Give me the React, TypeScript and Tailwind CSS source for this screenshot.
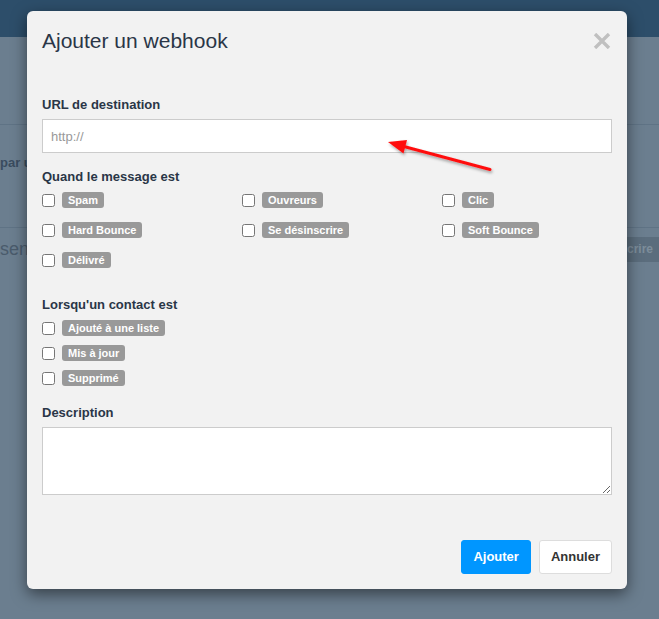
import React from 'react';

const messageEvents = ['Spam', 'Ouvreurs', 'Clic', 'Hard Bounce', 'Se désinscrire', 'Soft Bounce', 'Délivré'];
const contactEvents = ['Ajouté à une liste', 'Mis à jour', 'Supprimé'];

const Option: React.FC<{ label: string }> = ({ label }) => (
  <label className="flex items-center h-[16px] gap-[7px]">
    <input type="checkbox" className="m-0 w-[13px] h-[13px] shrink-0" />
    <span className="bg-[#999999] text-white font-bold text-[11px] leading-[16px] px-[6px] rounded-[3px] whitespace-nowrap">
      {label}
    </span>
  </label>
);

const App: React.FC = () => {
  return (
    <div className="relative w-full h-[619px] overflow-hidden bg-[#6b7e8f] font-['Liberation_Sans',Arial,sans-serif]">
      {/* page behind the backdrop */}
      <div className="absolute inset-0 flex flex-col">
        <div className="h-[37px] bg-[#2d4e6a]" />
        <div className="h-[88px] border-b border-[#5f7385]" />
        <div className="h-[103px] border-b border-[#5f7385] pt-[25px]">
          <span className="text-[13px] font-bold text-[#3a4c5f]">par un</span>
        </div>
        <div className="flex items-start justify-between pt-[9px]">
          <span className="text-[18px] text-[#4a5b6c] leading-[25px]">sen</span>
          <span className="bg-[#5b6d7d] text-[#7d8d9b] text-[12px] font-bold leading-[25px] pl-[14px] pr-[6px]">Désinscrire</span>
        </div>
      </div>

      {/* modal */}
      <div className="relative ml-[27px] mt-[11px] w-[600px] bg-[#f2f2f2] rounded-[6px] shadow-[0_5px_15px_rgba(0,0,0,0.5)]">
        <div className="flex items-start justify-between px-[15px] pt-[15px]">
          <h4 className="text-[21px] leading-[30px] text-[#2a3647]">Ajouter un webhook</h4>
          <button className="mt-[7px] mr-[1px]" aria-label="Fermer">
            <svg width="18" height="16" viewBox="0 0 18 16">
              <path d="M2 1 L16 15 M16 1 L2 15" stroke="#c0c0c0" strokeWidth="3.4" />
            </svg>
          </button>
        </div>

        <div className="px-[15px] pt-[40px] pb-[15px] text-[#2a3647]">
          <div className="text-[13px] font-bold leading-[18px] mb-[5px]">URL de destination</div>
          <input
            className="block w-full h-[34px] border border-[#cccccc] bg-white px-[8px] text-[13px] placeholder:text-[#999999] outline-none"
            placeholder="http://"
          />

          <div className="text-[13px] font-bold leading-[18px] mt-[15px]">Quand le message est</div>
          <div className="grid grid-cols-[200px_200px_1fr] gap-y-[14px] mt-[6px]">
            {messageEvents.map((e) => (
              <Option key={e} label={e} />
            ))}
          </div>

          <div className="text-[13px] font-bold leading-[18px] mt-[28px]">Lorsqu'un contact est</div>
          <div className="flex flex-col gap-[9px] mt-[6px]">
            {contactEvents.map((e) => (
              <Option key={e} label={e} />
            ))}
          </div>

          <div className="text-[13px] font-bold leading-[18px] mt-[18px] mb-[5px]">Description</div>
          <textarea className="block w-full h-[68px] border border-[#cccccc] bg-white outline-none" />

          <div className="flex justify-end gap-[8px] mt-[45px]">
            <button className="h-[34px] px-[11px] border border-[#0096ff] bg-[#0096ff] text-white text-[13px] font-bold rounded-[3px]">
              Ajouter
            </button>
            <button className="h-[34px] px-[11px] border border-[#dddddd] bg-white text-[#333333] text-[13px] font-bold rounded-[3px]">
              Annuler
            </button>
          </div>
        </div>
      </div>

      {/* red annotation arrow */}
      <svg className="absolute left-0 top-0 pointer-events-none" width="659" height="619">
        <defs>
          <filter id="sh" x="-20%" y="-50%" width="140%" height="200%">
            <feDropShadow dx="1" dy="2" stdDeviation="1.5" floodColor="#000" floodOpacity="0.35" />
          </filter>
        </defs>
        <g filter="url(#sh)">
          <line x1="490" y1="169.5" x2="402" y2="146" stroke="#ff1010" strokeWidth="3" strokeLinecap="round" />
          <polygon points="388,142 407,140 403.5,153.5" fill="#ff1010" />
        </g>
      </svg>
    </div>
  );
};

export default App;
